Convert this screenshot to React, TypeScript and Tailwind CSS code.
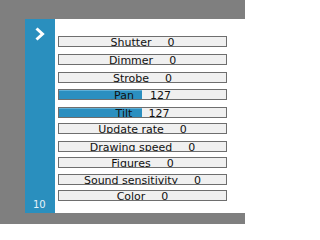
const channels = [
  { label: 'Shutter', value: 0, gap: '' },
  { label: 'Dimmer', value: 0, gap: 'mt-[7px]' },
  { label: 'Strobe', value: 0, gap: 'mt-[7px]' },
  { label: 'Pan', value: 127, gap: 'mt-[6px]' },
  { label: 'Tilt', value: 127, gap: 'mt-[7px]' },
  { label: 'Update rate', value: 0, gap: 'mt-[5px]' },
  { label: 'Drawing speed', value: 0, gap: 'mt-[7px]' },
  { label: 'Figures', value: 0, gap: 'mt-[5px]' },
  { label: 'Sound sensitivity', value: 0, gap: 'mt-[6px]' },
  { label: 'Color', value: 0, gap: 'mt-[5px]' },
]

function Slider({ label, value, gap }: { label: string; value: number; gap: string }) {
  return (
    <div className={`relative h-[11px] w-[169px] overflow-hidden border border-[#6e6e6e] bg-[#f0f0f0] ${gap}`}>
      {/* fill */}
      <div
        className="absolute inset-y-0 left-0 bg-[#2b8fc0] border-t border-[#5fb0d8]"
        style={{ width: `${(value / 255) * 100}%` }}
      />
      <div className="relative flex justify-center whitespace-nowrap text-[11px] leading-[11px] text-[#111]">
        <span>{label}</span>
        <span className="ml-[16px]">{value}</span>
      </div>
    </div>
  )
}

export default function App() {
  return (
    <div
      className="h-[224px] w-[245px] bg-[#7f7f7f] pl-[25px] pt-[19px]"
      style={{ fontFamily: '"DejaVu Sans", Verdana, sans-serif' }}
    >
      <div className="flex h-[194px]">
        {/* Side strip */}
        <div className="flex w-[30px] flex-col justify-between bg-[#2a8fbe] pb-[2px] pl-[8px] pt-[8px]">
          <svg width="12" height="14" viewBox="0 0 12 14" className="ml-[1px]">
            <path d="M2.5 1.5 L8.5 7 L2.5 12.5" fill="none" stroke="#fff" strokeWidth="3" />
          </svg>
          <span className="text-[10px] leading-[12px] text-[#e8f4fa]">10</span>
        </div>

        {/* Channel sliders */}
        <div className="flex-1 bg-white pl-[3px] pt-[17px]">
          {channels.map((c) => (
            <Slider key={c.label} {...c} />
          ))}
        </div>
      </div>
    </div>
  )
}
